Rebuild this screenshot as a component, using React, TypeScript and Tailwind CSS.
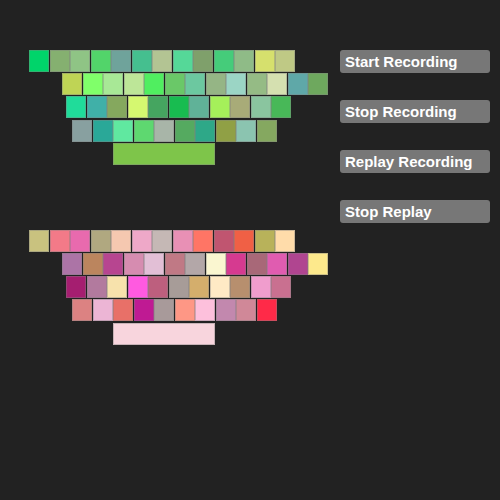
import React from 'react';

const greenRows: string[][] = [
  ['#00d46a', '#85b070', '#8fc485', '#52d46a', '#6fa39b', '#45bf8f', '#b3c493', '#55d898', '#7fa06b', '#45cc7a', '#8fbb87', '#d6e06d', '#bfc985'],
  ['#bfd455', '#80ff6a', '#a8e896', '#bde698', '#50ee60', '#6ac868', '#6cc8a0', '#95b585', '#9bd5c5', '#95bb85', '#d5e0b0', '#5fa8a8', '#6ea85e'],
  ['#20dc9a', '#40b0a8', '#85a85e', '#d5f870', '#45a560', '#18bc50', '#60b298', '#a5f05a', '#a8ab78', '#8ac59f', '#48b858'],
  ['#88a0a0', '#2aa898', '#60e8a0', '#5ed870', '#a8b5a8', '#55aa60', '#2ea888', '#90a045', '#8bc4b0', '#85a860'],
];

const pinkRows: string[][] = [
  ['#c9c27f', '#f37a88', '#e86aae', '#b0a880', '#f5c8b0', '#eea8c8', '#c5b8b5', '#e890b5', '#ff7565', '#c05570', '#f06045', '#b8b25a', '#ffdcaa'],
  ['#ac74a6', '#bb855e', '#b74590', '#d68cb0', '#e2bfd6', '#c07985', '#b3a7a8', '#faf6d0', '#d63a90', '#a86878', '#e05cb0', '#b04590', '#fde98c'],
  ['#a51e70', '#b27a9e', '#f7e2ac', '#ff5ae0', '#bd5f7e', '#a79c98', '#d4ae6c', '#ffeac5', '#b78f6e', '#f09dcd', '#c97090'],
  ['#dc8282', '#ecb5d5', '#e87068', '#bf1a93', '#a89a9a', '#fe9785', '#fdc0dc', '#c288ae', '#d08898', '#ff2a48'],
];

// row offsets from the keyboard's left edge
const offsets = ['ml-0', 'ml-[33px]', 'ml-[37px]', 'ml-[43px]'];

function Keyboard({ rows, space }: { rows: string[][]; space: string }) {
  return (
    <div className="flex flex-col gap-[1.2px]">
      {rows.map((row, r) => (
        <div key={r} className={`flex gap-[0.5px] ${offsets[r]}`}>
          {row.map((c, i) => (
            <div
              key={i}
              className="w-[20px] h-[22px] border border-[#808080]/40"
              style={{ backgroundColor: c }}
            />
          ))}
        </div>
      ))}
      <div
        className="ml-[84px] w-[102px] h-[22px] border border-[#808080]/40"
        style={{ backgroundColor: space }}
      />
    </div>
  );
}

const buttons = ['Start Recording', 'Stop Recording', 'Replay Recording', 'Stop Replay'];

export default function App() {
  return (
    <div className="w-[500px] h-[500px] bg-[#222222] flex pt-[50px] pl-[29px]">
      <div className="flex flex-col gap-[65px] w-[311px]">
        <Keyboard rows={greenRows} space="#7ec54a" />
        <Keyboard rows={pinkRows} space="#f8d5dd" />
      </div>
      <div className="flex flex-col gap-[27px]">
        {buttons.map((b) => (
          <button
            key={b}
            className="w-[150px] h-[23px] bg-[#777777] rounded-[3px] text-left pl-[5px] text-white font-bold text-[15px] leading-[23px] font-['Liberation_Sans',Arial,sans-serif]"
          >
            {b}
          </button>
        ))}
      </div>
    </div>
  );
}
